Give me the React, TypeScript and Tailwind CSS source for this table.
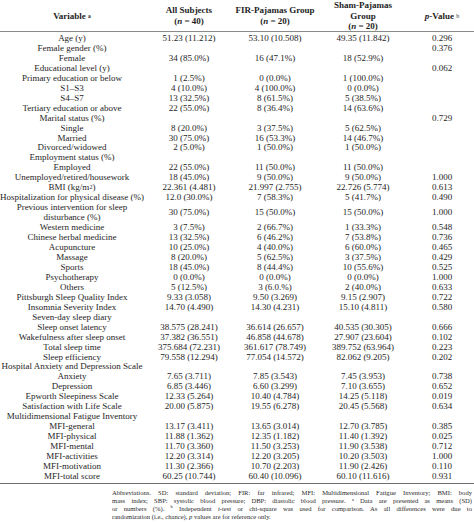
import type { ReactNode } from "react";

type Row = {
  label: ReactNode;
  all?: string;
  fir?: string;
  sham?: string;
  p?: string;
};

const rows: Row[] = [
  { label: "Age (y)", all: "51.23 (11.212)", fir: "53.10 (10.508)", sham: "49.35 (11.842)", p: "0.296" },
  { label: "Female gender (%)", p: "0.376" },
  { label: "Female", all: "34 (85.0%)", fir: "16 (47.1%)", sham: "18 (52.9%)" },
  { label: "Educational level (y)", p: "0.062" },
  { label: "Primary education or below", all: "1 (2.5%)", fir: "0 (0.0%)", sham: "1 (100.0%)" },
  { label: "S1–S3", all: "4 (10.0%)", fir: "4 (100.0%)", sham: "0 (0.0%)" },
  { label: "S4–S7", all: "13 (32.5%)", fir: "8 (61.5%)", sham: "5 (38.5%)" },
  { label: "Tertiary education or above", all: "22 (55.0%)", fir: "8 (36.4%)", sham: "14 (63.6%)" },
  { label: "Marital status (%)", p: "0.729" },
  { label: "Single", all: "8 (20.0%)", fir: "3 (37.5%)", sham: "5 (62.5%)" },
  { label: "Married", all: "30 (75.0%)", fir: "16 (53.3%)", sham: "14 (46.7%)" },
  { label: "Divorced/widowed", all: "2 (5.0%)", fir: "1 (50.0%)", sham: "1 (50.0%)" },
  { label: "Employment status (%)" },
  { label: "Employed", all: "22 (55.0%)", fir: "11 (50.0%)", sham: "11 (50.0%)" },
  { label: "Unemployed/retired/housework", all: "18 (45.0%)", fir: "9 (50.0%)", sham: "9 (50.0%)", p: "1.000" },
  {
    label: (
      <>
        BMI (kg/m<sup className="text-[6px] relative -top-[1px]">2</sup>)
      </>
    ),
    all: "22.361 (4.481)",
    fir: "21.997 (2.755)",
    sham: "22.726 (5.774)",
    p: "0.613",
  },
  { label: "Hospitalization for physical disease (%)", all: "12.0 (30.0%)", fir: "7 (58.3%)", sham: "5 (41.7%)", p: "0.490" },
  {
    label: (
      <>
        Previous intervention for sleep
        <br />
        disturbance (%)
      </>
    ),
    all: "30 (75.0%)",
    fir: "15 (50.0%)",
    sham: "15 (50.0%)",
    p: "1.000",
  },
  { label: "Western medicine", all: "3 (7.5%)", fir: "2 (66.7%)", sham: "1 (33.3%)", p: "0.548" },
  { label: "Chinese herbal medicine", all: "13 (32.5%)", fir: "6 (46.2%)", sham: "7 (53.8%)", p: "0.736" },
  { label: "Acupuncture", all: "10 (25.0%)", fir: "4 (40.0%)", sham: "6 (60.0%)", p: "0.465" },
  { label: "Massage", all: "8 (20.0%)", fir: "5 (62.5%)", sham: "3 (37.5%)", p: "0.429" },
  { label: "Sports", all: "18 (45.0%)", fir: "8 (44.4%)", sham: "10 (55.6%)", p: "0.525" },
  { label: "Psychotherapy", all: "0 (0.0%)", fir: "0 (0.0%)", sham: "0 (0.0%)", p: "1.000" },
  { label: "Others", all: "5 (12.5%)", fir: "3 (6.0.%)", sham: "2 (40.0%)", p: "0.633" },
  { label: "Pittsburgh Sleep Quality Index", all: "9.33 (3.058)", fir: "9.50 (3.269)", sham: "9.15 (2.907)", p: "0.722" },
  { label: "Insomnia Severity Index", all: "14.70 (4.490)", fir: "14.30 (4.231)", sham: "15.10 (4.811)", p: "0.580" },
  { label: "Seven-day sleep diary" },
  { label: "Sleep onset latency", all: "38.575 (28.241)", fir: "36.614 (26.657)", sham: "40.535 (30.305)", p: "0.666" },
  { label: "Wakefulness after sleep onset", all: "37.382 (36.551)", fir: "46.858 (44.678)", sham: "27.907 (23.604)", p: "0.102" },
  { label: "Total sleep time", all: "375.684 (72.231)", fir: "361.617 (78.749)", sham: "389.752 (63.964)", p: "0.223" },
  { label: "Sleep efficiency", all: "79.558 (12.294)", fir: "77.054 (14.572)", sham: "82.062 (9.205)", p: "0.202" },
  { label: "Hospital Anxiety and Depression Scale" },
  { label: "Anxiety", all: "7.65 (3.711)", fir: "7.85 (3.543)", sham: "7.45 (3.953)", p: "0.738" },
  { label: "Depression", all: "6.85 (3.446)", fir: "6.60 (3.299)", sham: "7.10 (3.655)", p: "0.652" },
  { label: "Epworth Sleepiness Scale", all: "12.33 (5.264)", fir: "10.40 (4.784)", sham: "14.25 (5.118)", p: "0.019" },
  { label: "Satisfaction with Life Scale", all: "20.00 (5.875)", fir: "19.55 (6.278)", sham: "20.45 (5.568)", p: "0.634" },
  { label: "Multidimensional Fatigue Inventory" },
  { label: "MFI-general", all: "13.17 (3.411)", fir: "13.65 (3.014)", sham: "12.70 (3.785)", p: "0.385" },
  { label: "MFI-physical", all: "11.88 (1.362)", fir: "12.35 (1.182)", sham: "11.40 (1.392)", p: "0.025" },
  { label: "MFI-mental", all: "11.70 (3.360)", fir: "11.50 (3.253)", sham: "11.90 (3.538)", p: "0.712" },
  { label: "MFI-activities", all: "12.20 (3.314)", fir: "12.20 (3.205)", sham: "10.20 (3.503)", p: "1.000" },
  { label: "MFI-motivation", all: "11.30 (2.366)", fir: "10.70 (2.203)", sham: "11.90 (2.426)", p: "0.110" },
  { label: "MFI-total score", all: "60.25 (10.744)", fir: "60.40 (10.096)", sham: "60.10 (11.616)", p: "0.931" },
];

const cols = "grid grid-cols-[144px_90px_82px_94px_64px]";

export default function App() {
  return (
    <div className="w-[474px] h-[523px] overflow-hidden bg-white text-[#1e1e1e] font-['Liberation_Serif',serif]">
      {/* Header */}
      <div className={`${cols} h-[32px] pb-[7px] items-center text-center text-[9px] leading-[10.5px] font-bold border-b border-[#8a8a8a]`}>
        <div className="whitespace-nowrap">
          Variable <sup className="text-[5.5px] relative -top-[1px]">a</sup>
        </div>
        <div>
          All Subjects
          <br />
          (<i>n</i> = 40)
        </div>
        <div>
          FIR-Pajamas Group
          <br />
          (<i>n</i> = 20)
        </div>
        <div>
          Sham-Pajamas
          <br />
          Group
          <br />
          (<i>n</i> = 20)
        </div>
        <div className="whitespace-nowrap">
          <i>p</i>-Value <sup className="text-[6px] relative -top-[1px] font-normal">b</sup>
        </div>
      </div>

      {/* Body */}
      <div className="pt-[2px] pb-[1px] border-b border-[#6f6f6f] text-[9px] leading-[9.95px] text-center">
        {rows.map((r, i) => (
          <div key={i} className={`${cols} items-center`}>
            <div className="whitespace-nowrap">{r.label}</div>
            <div className="whitespace-nowrap">{r.all}</div>
            <div className="whitespace-nowrap">{r.fir}</div>
            <div className="whitespace-nowrap">{r.sham}</div>
            <div className="whitespace-nowrap">{r.p}</div>
          </div>
        ))}
      </div>

      {/* Footnote */}
      <div className="ml-[112px] w-[360px] mt-[5px] text-[6.6px] leading-[7.9px] text-[#2a2a2a]">
        <div className="whitespace-nowrap text-justify [text-align-last:justify]">
          Abbreviations. SD: standard deviation; FIR: far infrared; MFI: Multidimensional Fatigue Inventory; BMI: body
        </div>
        <div className="whitespace-nowrap text-justify [text-align-last:justify]">
          mass index; SBP: systolic blood pressure; DBP: diastolic blood pressure. <sup className="text-[4.5px]">a</sup> Data are presented as means (SD)
        </div>
        <div className="whitespace-nowrap text-justify [text-align-last:justify]">
          or numbers (%). <sup className="text-[4.5px]">b</sup> Independent <i>t</i>-test or chi-square was used for comparison. As all differences were due to
        </div>
        <div className="whitespace-nowrap">
          randomization (i.e., chance), <i>p</i> values are for reference only.
        </div>
      </div>
    </div>
  );
}
